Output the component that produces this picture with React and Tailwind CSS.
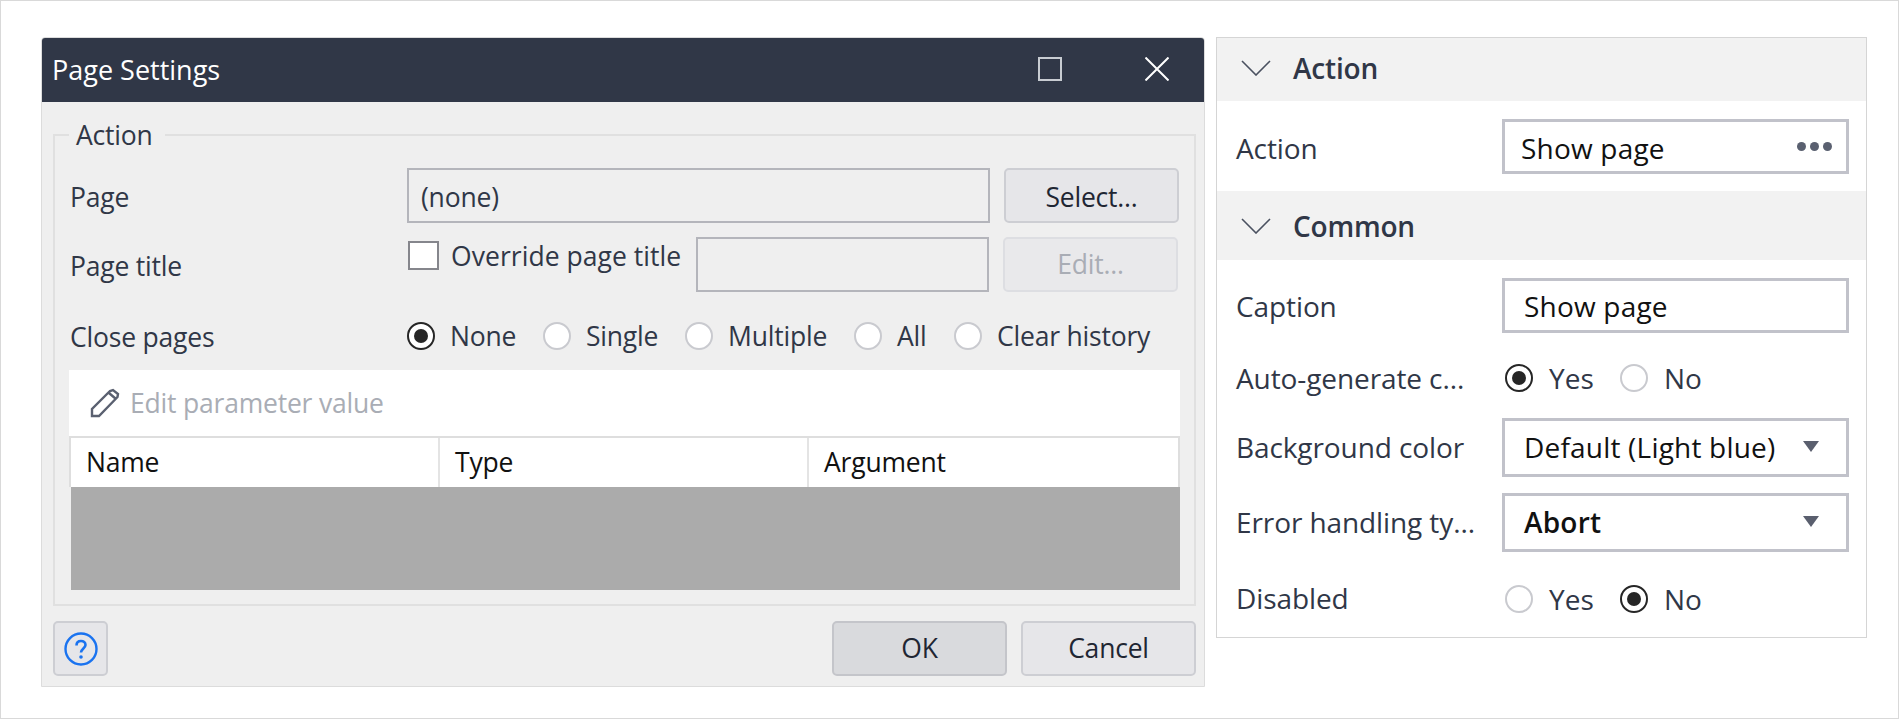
import React from 'react';

const font = "font-['Open_Sans','Noto_Sans',sans-serif]";

const Radio = ({ checked, label, className = '', textClass = 'ml-[15px] text-[26.5px] tracking-[-0.2px]' }) => (
  <div className={`flex items-center ${className}`}>
    <span className={`flex h-[28px] w-[28px] shrink-0 items-center justify-center rounded-full border-2 bg-white ${checked ? 'border-[#262626]' : 'border-[#c9cacf]'}`}>
      {checked && <span className="h-[14px] w-[14px] rounded-full bg-[#262626]" />}
    </span>
    <span className={`leading-[32px] text-[#303747] ${textClass}`}>{label}</span>
  </div>
);

const PropRadio = (props) => <Radio {...props} textClass="ml-[16px] text-[28px] tracking-[0px]" />;

const Button = ({ children, className = '' }) => (
  <div className={`flex h-[55px] w-[175px] shrink-0 items-center justify-center rounded-[5px] border-2 text-[26.5px] tracking-[-0.2px] ${className}`}>
    {children}
  </div>
);

const Caret = () => (
  <svg width="16" height="11" viewBox="0 0 16 11" className="shrink-0">
    <path d="M0 0H16L8 11Z" fill="#5a5f6e" />
  </svg>
);

const Chevron = () => (
  <svg width="30" height="16" viewBox="0 0 30 16" className="shrink-0">
    <path d="M1 1L15 15L29 1" fill="none" stroke="#4a5160" strokeWidth="1.6" />
  </svg>
);

const PropRow = ({ label, className = '', labelClass = '', children }) => (
  <div className={`flex items-center ${className}`}>
    <div className={`w-[285px] shrink-0 overflow-hidden whitespace-nowrap pl-[19px] text-[28px] leading-[36px] tracking-[-0.1px] text-[#303747] ${labelClass}`}>{label}</div>
    {children}
  </div>
);

const PropBox = ({ className = '', children }) => (
  <div className={`flex w-[347px] items-center border-[3px] border-[#c1c2ca] bg-white text-[28px] tracking-[0.2px] text-[#111111] ${className}`}>
    {children}
  </div>
);

const SectionHeader = ({ title, className = '' }) => (
  <div className={`flex items-center bg-[#f2f2f2] pl-[24px] ${className}`}>
    <Chevron />
    <span className="ml-[22px] text-[28px] leading-[36px] font-semibold tracking-[-0.2px] text-[#303747]">{title}</span>
  </div>
);

export default function App() {
  return (
    <div className={`flex h-[719px] w-[1899px] items-start border border-[#d9d9d9] bg-white pl-[40px] pt-[36px] ${font}`}>
      {/* dialog */}
      <div className="flex h-[650px] w-[1164px] flex-col overflow-hidden rounded-t-[4px] border border-[#dcdcdc] bg-[#efefef]">
        <div className="flex h-[64px] shrink-0 items-center bg-[#303747] pl-[10px] text-white">
          <span className="text-[27px] leading-[36px]">Page Settings</span>
          <div className="ml-auto mb-[2px] h-[24px] w-[24px] border-2 border-[#c8ccd2]" />
          <svg width="24" height="24" viewBox="0 0 24 24" className="ml-[83px] mb-[2px] mr-[35px]">
            <path d="M0.5 0.5L23.5 23.5M23.5 0.5L0.5 23.5" stroke="#ffffff" strokeWidth="2" />
          </svg>
        </div>

        <div className="flex flex-1 flex-col pl-[11px] pr-[8px]">
          <fieldset className="mt-[16px] border-2 border-[#e0e0e0] pb-[14px] pl-[14px] pr-[14px]">
            <legend className="pl-[7px] pr-[12px] text-[26.5px] leading-[34px] tracking-[-0.2px] text-[#303747]">Action</legend>

            <div className="mt-[16px] flex h-[55px] items-start">
              <div className="h-[55px] w-[338px] shrink-0 pl-[1px] pt-[2px] text-[26.5px] leading-[55px] tracking-[-0.2px] text-[#303747]">Page</div>
              <div className="h-[55px] w-[583px] border-2 border-[#b4b5bb] pl-[12px] pt-[2px] text-[26.5px] leading-[51px] tracking-[-0.2px] text-[#303747]">(none)</div>
              <Button className="ml-[14px] border-[#cdced3] bg-[#e6e6e9] pt-[4px] text-[#1f2633]">Select...</Button>
            </div>

            <div className="mt-[14px] flex h-[55px] items-start">
              <div className="h-[55px] w-[339px] shrink-0 pl-[1px] pt-[2px] text-[26.5px] leading-[55px] tracking-[-0.2px] text-[#303747]">Page title</div>
              <div className="mt-[4px] h-[29px] w-[31px] shrink-0 border-2 border-[#85868c] bg-white" />
              <div className="ml-[12px] mt-[3px] w-[245px] shrink-0 whitespace-nowrap text-[26.5px] leading-[32px] tracking-[0.05px] text-[#303747]">Override page title</div>
              <div className="h-[55px] w-[293px] border-2 border-[#b4b5bb]" />
              <Button className="ml-[14px] border-[#dddee2] bg-[#e9e9eb] text-[#a9adb5]">Edit...</Button>
            </div>

            <div className="mt-[26px] flex items-center">
              <div className="w-[338px] shrink-0 pl-[1px] pt-[3px] text-[26.5px] leading-[32px] tracking-[-0.2px] text-[#303747]">Close pages</div>
              <Radio checked label="None" className="w-[136px]" />
              <Radio label="Single" className="w-[142px]" />
              <Radio label="Multiple" className="w-[169px]" />
              <Radio label="All" className="w-[100px]" />
              <Radio label="Clear history" />
            </div>

            <div className="mt-[17px] flex h-[66px] items-center bg-white pl-[21px]">
              <svg width="30" height="30" viewBox="0 0 30 30">
                <path d="M2 28V21L20 3L23 2L28 6L27.5 9L9 28Z M19 5L26 11" fill="none" stroke="#5a6070" strokeWidth="2.4" />
              </svg>
              <span className="ml-[10px] text-[26.5px] leading-[36px] tracking-[-0.2px] text-[#a9adb5]">Edit parameter value</span>
            </div>

            <div className="flex h-[51px] border-x-2 border-t-2 border-[#dedede] bg-white text-[26.5px] tracking-[-0.2px] text-[#111111]">
              <div className="flex w-[369px] items-center border-r-2 border-[#e4e4e4] pl-[15px]">Name</div>
              <div className="flex w-[369px] items-center border-r-2 border-[#e4e4e4] pl-[15px]">Type</div>
              <div className="flex flex-1 items-center pl-[15px]">Argument</div>
            </div>
            <div className="ml-[2px] h-[103px] bg-[#ababab]" />
          </fieldset>

          <div className="mt-[15px] flex items-start">
            <div className="flex h-[55px] w-[55px] items-center justify-center rounded-[5px] border-2 border-[#cdced3] bg-[#e6e6e9]">
              <svg width="34" height="34" viewBox="0 0 34 34" fill="none">
                <circle cx="17" cy="17" r="15.5" stroke="#1a73f0" strokeWidth="2.4" />
                <path d="M12.5 13.5C12.5 10.5 14.5 9 17 9C19.5 9 21.5 10.5 21.5 13C21.5 16.2 17 16.8 17 20.5" stroke="#1a73f0" strokeWidth="2.6" />
                <circle cx="17" cy="25" r="1.8" fill="#1a73f0" />
              </svg>
            </div>
            <Button className="ml-auto border-[#c4c5ca] bg-[#d9dadd] text-[#1f2633]">OK</Button>
            <Button className="ml-[14px] border-[#cdced3] bg-[#e6e6e9] text-[#1f2633]">Cancel</Button>
          </div>
        </div>
      </div>

      {/* properties panel */}
      <div className="ml-[11px] flex h-[601px] w-[651px] flex-col border border-[#d5d5d5] bg-white">
        <SectionHeader title="Action" className="h-[63px] pb-[3px]" />
        <PropRow label="Action" className="h-[90px]" labelClass="pt-[3px]">
          <PropBox className="h-[55px] pl-[16px]">
            <span className="pt-[4px]">Show page</span>
            <span className="ml-auto mr-[14px] flex gap-[4px]">
              <span className="h-[9px] w-[9px] rounded-full bg-[#5a6070]" />
              <span className="h-[9px] w-[9px] rounded-full bg-[#5a6070]" />
              <span className="h-[9px] w-[9px] rounded-full bg-[#5a6070]" />
            </span>
          </PropBox>
        </PropRow>
        <SectionHeader title="Common" className="h-[69px]" />
        <PropRow label="Caption" className="mt-[18px] h-[55px]">
          <PropBox className="h-[55px] pl-[19px]">Show page</PropBox>
        </PropRow>
        <PropRow label="Auto-generate c..." className="mt-[22px] h-[46px]">
          <PropRadio checked label="Yes" className="ml-[3px] w-[115px]" />
          <PropRadio label="No" />
        </PropRow>
        <PropRow label="Background color" className="mt-[17px] h-[59px]" labelClass="pb-[1px]">
          <PropBox className="h-[59px] pb-[2px] pl-[19px]">
            Default (Light blue)
            <span className="ml-auto mr-[27px]"><Caret /></span>
          </PropBox>
        </PropRow>
        <PropRow label="Error handling ty..." className="mt-[16px] h-[59px]" labelClass="pb-[1px]">
          <PropBox className="h-[59px] pb-[2px] pl-[19px] font-semibold">
            Abort
            <span className="ml-auto mr-[27px]"><Caret /></span>
          </PropBox>
        </PropRow>
        <PropRow label="Disabled" className="mt-[24px] h-[46px]" labelClass="pb-[3px]">
          <PropRadio label="Yes" className="ml-[3px] w-[115px]" />
          <PropRadio checked label="No" />
        </PropRow>
      </div>
    </div>
  );
}
